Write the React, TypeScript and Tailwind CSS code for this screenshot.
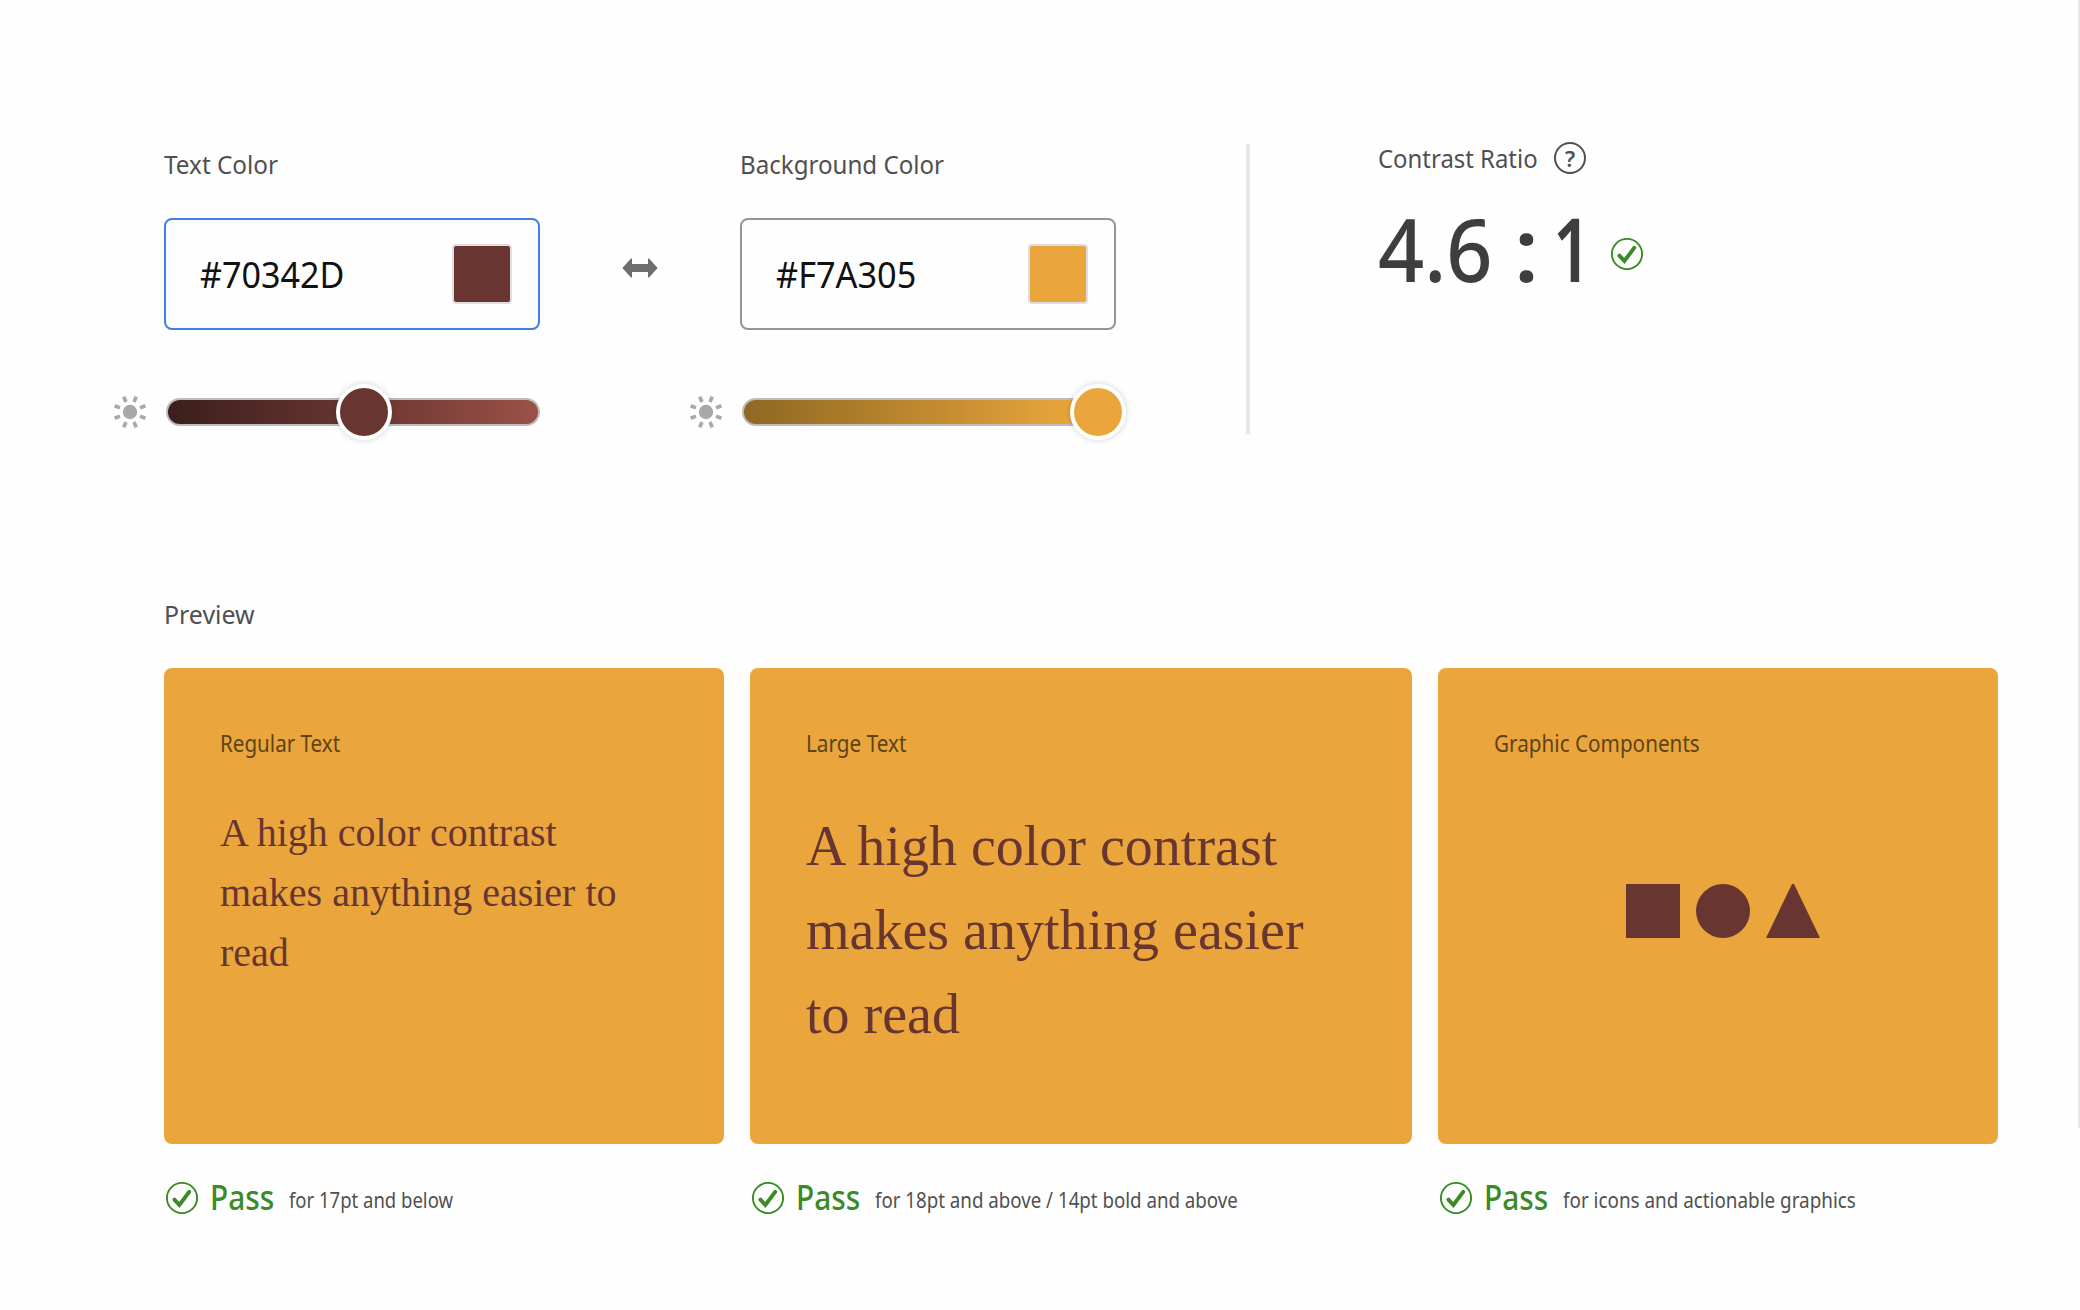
import { useLayoutEffect, useRef, useState } from "react";
import clsx from "clsx";

/* Single line of text condensed or stretched horizontally to a set width. */
function FitText({ width, className, children }: { width: number; className?: string; children: string }) {
  const ref = useRef<HTMLSpanElement>(null);
  const [scale, setScale] = useState(1);
  useLayoutEffect(() => {
    if (ref.current) setScale(width / ref.current.offsetWidth);
  }, [width, children]);
  return (
    <span className={clsx("block shrink-0 whitespace-nowrap", className)} style={{ width }}>
      <span ref={ref} className="inline-block origin-left" style={{ transform: `scaleX(${scale})` }}>
        {children}
      </span>
    </span>
  );
}

function CheckIcon() {
  return (
    <svg className="size-8 shrink-0" viewBox="0 0 32 32" fill="none" stroke="#3a8a25">
      <circle cx="16" cy="16" r="15.1" strokeWidth="1.9" />
      <path d="M8.4 17.6 L13.4 23 L23.2 9.8" strokeWidth="3.9" strokeLinecap="round" strokeLinejoin="miter" />
    </svg>
  );
}

const rays = [22, 68, 112, 158, 202, 248, 292, 338];

function SunIcon() {
  return (
    <svg className="size-8 shrink-0 overflow-visible" viewBox="-16 -16 32 32" fill="#a8a8a8">
      <circle r="7.2" />
      {rays.map((a) => (
        <rect key={a} x="-1.8" y="-16.6" width="3.6" height="5.8" transform={`rotate(${a})`} />
      ))}
    </svg>
  );
}

type PickerProps = {
  label: string;
  labelWidth: number;
  hex: string;
  hexWidth: number;
  border: string;
  swatch: string;
  track: string;
  thumb: string;
};

function ColorPicker({ label, labelWidth, hex, hexWidth, border, swatch, track, thumb }: PickerProps) {
  return (
    <section className="flex w-[426px] flex-col">
      <div className="pl-[50px]">
        <FitText width={labelWidth} className="text-[26px] leading-10 font-[450] text-[#505050]">{label}</FitText>
        <div className={clsx("mt-[34px] flex h-28 w-[376px] items-center justify-between rounded-lg border-2 pr-[26px] pl-[34px]", border)}>
          <FitText width={hexWidth} className="mt-0.5 text-[36px] leading-[48px] font-[450] text-[#111]">{hex}</FitText>
          <div className={clsx("size-[60px] rounded border-2 border-[#dedede]", swatch)} />
        </div>
      </div>
      <div className="mt-[54px] flex h-14 items-center gap-5">
        <SunIcon />
        <div className={clsx("relative h-7 w-[374px] rounded-full border-2 border-[#bcbcbc]", track)}>
          <div className={clsx("absolute -top-4 size-14 rounded-full border-4 border-white shadow-[0_0_6px_rgba(0,0,0,0.18)]", swatch, thumb)} />
        </div>
      </div>
    </section>
  );
}

type CardProps = {
  title: string;
  titleWidth: number;
  note: string;
  noteWidth: number;
  size: string;
  children: React.ReactNode;
};

function PreviewCard({ title, titleWidth, note, noteWidth, size, children }: CardProps) {
  return (
    <article className={clsx("flex flex-col", size)}>
      <div className="h-[476px] rounded-lg bg-[#eaa63c] px-14 pt-[59px]">
        <FitText width={titleWidth} className="text-[23px] leading-8 font-[450] text-[#5e4318]">{title}</FitText>
        {children}
      </div>
      <div className="mt-[34px] flex h-10 items-center pl-0.5">
        <CheckIcon />
        <FitText width={64} className="ml-[12px] -mt-0.5 text-[34px] leading-10 font-medium text-[#3a8a25]">Pass</FitText>
        <FitText width={noteWidth} className="ml-[15px] mt-0.5 text-[22px] leading-8 font-[450] text-[#505050]">{note}</FitText>
      </div>
    </article>
  );
}

export default function App() {
  return (
    <div className="flex h-[1310px] w-[2080px] items-start justify-between overflow-hidden bg-[#fefefe] font-['Noto_Sans',sans-serif]">
      <main className="flex flex-col pl-[114px]">
        <div className="flex items-start pt-[138px]">
          <div className="pt-1.5">
            <ColorPicker
              label="Text Color"
              labelWidth={114}
              hex="#70342D"
              hexWidth={145}
              border="border-[#4080e4]"
              swatch="bg-[#683530]"
              track="bg-linear-to-r from-[#3b1f1c] via-[#683530] to-[#9b5147]"
              thumb="left-[168px]"
            />
          </div>
          <svg className="mt-[120px] ml-[82px] h-5 w-9" viewBox="0 0 36 20" fill="#6e6e6e">
            <path d="M0.4 10 L9 0.6 H10 V6 H26 V0.6 H27 L35.6 10 L27 19.4 H26 V14 H10 V19.4 H9 Z" />
          </svg>
          <div className="pt-1.5 pl-8">
            <ColorPicker
              label="Background Color"
              labelWidth={204}
              hex="#F7A305"
              hexWidth={140}
              border="border-[#959595]"
              swatch="bg-[#eaa63c]"
              track="bg-linear-to-r from-[#8f6822] to-[#eaa63c] to-90%"
              thumb="left-[326px]"
            />
          </div>
          <div className="mt-1.5 ml-[130px] h-[290px] w-1 bg-[#e6e6e6]" />
          <section className="ml-32 flex flex-col">
            <div className="flex h-10 items-center">
              <FitText width={160} className="text-[26px] leading-10 font-[450] text-[#505050]">Contrast Ratio</FitText>
              <div className="ml-4 flex size-8 items-center justify-center rounded-full border-2 border-[#505050] text-[22px] leading-none font-semibold text-[#505050]">?</div>
            </div>
            <div className="mt-[30px] flex h-20 items-center text-[88px] leading-20 font-medium text-[#3e3e3e]">
              <FitText width={115}>4.6</FitText>
              <FitText width={27} className="ml-[20px]">:</FitText>
              <FitText width={38} className="ml-[13px] font-semibold">1</FitText>
              <div className="mt-3 ml-5">
                <CheckIcon />
              </div>
            </div>
          </section>
        </div>

        <section className="mt-[154px] pl-[50px]">
          <FitText width={91} className="text-[26px] leading-10 font-[450] text-[#505050]">Preview</FitText>
          <div className="mt-[34px] flex gap-[26px]">
            <PreviewCard title="Regular Text" titleWidth={120} note="for 17pt and below" noteWidth={164} size="w-[560px]">
              <p className="mt-11 font-['Liberation_Serif',serif] text-[40px] leading-[60px] text-[#683530]">
                A high color contrast makes anything easier to read
              </p>
            </PreviewCard>
            <PreviewCard title="Large Text" titleWidth={100} note="for 18pt and above / 14pt bold and above" noteWidth={363} size="w-[662px]">
              <p className="mt-[45px] font-['Liberation_Serif',serif] text-[56px] leading-[84px] text-[#683530]">
                A high color contrast makes anything easier to read
              </p>
            </PreviewCard>
            <PreviewCard title="Graphic Components" titleWidth={206} note="for icons and actionable graphics" noteWidth={293} size="w-[560px]">
              <div className="mt-[125px] ml-[132px] flex gap-4">
                <div className="size-[54px] bg-[#683530]" />
                <div className="size-[54px] rounded-full bg-[#683530]" />
                <svg className="size-[54px]" viewBox="0 0 54 54" fill="#683530">
                  <path d="M26 0 H28 L54 54 H0 Z" />
                </svg>
              </div>
            </PreviewCard>
          </div>
        </section>
      </main>
      <div className="h-[1128px] w-0.5 bg-[#e6e6e6]" />
    </div>
  );
}
